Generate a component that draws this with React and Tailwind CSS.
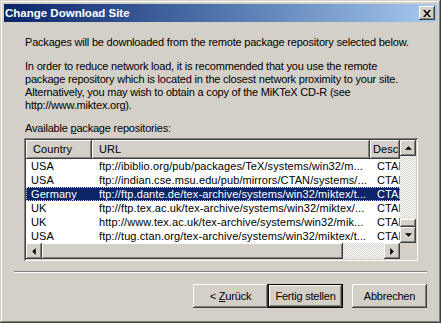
const raised =
  "bg-[#d4d0c8] shadow-[inset_-1px_-1px_#404040,inset_1px_1px_#fff,inset_-2px_-2px_#808080,inset_2px_2px_#d4d0c8]";
const track =
  "bg-[repeating-conic-gradient(#fff_0_25%,#d4d0c8_0_50%)] bg-size-[2px_2px]";

const Arrow = ({ dir }) => {
  const pts = {
    up: "0,4 4,0 8,4",
    down: "0,0 8,0 4,4",
    left: "4,0 4,8 0,4",
    right: "0,0 0,8 4,4",
  }[dir];
  const vert = dir === "up" || dir === "down";
  return (
    <svg width={vert ? 7 : 4} height={vert ? 4 : 7} viewBox={vert ? "0 0 8 4" : "0 0 4 8"}>
      <polygon points={pts} fill="#000" />
    </svg>
  );
};

const rows = [
  ["USA", "ftp://ibiblio.org/pub/packages/TeX/systems/win32/m...", "CTAN"],
  ["USA", "ftp://indian.cse.msu.edu/pub/mirrors/CTAN/systems/...", "CTAN"],
  ["Germany", "ftp://ftp.dante.de/tex-archive/systems/win32/miktex/t...", "CTAN"],
  ["UK", "ftp://ftp.tex.ac.uk/tex-archive/systems/win32/miktex/...", "CTAN"],
  ["UK", "http://www.tex.ac.uk/tex-archive/systems/win32/mik...", "CTAN"],
  ["USA", "ftp://tug.ctan.org/tex-archive/systems/win32/miktex/t...", "CTAN"],
];

const Button = ({ children, isDefault }) => (
  <div className={`w-[75px] h-[24px] ${isDefault ? "border border-black" : ""}`}>
    <div className={`w-full h-full flex items-center justify-center ${raised}`}>
      <span className="whitespace-pre">{children}</span>
    </div>
  </div>
);

export default function App() {
  return (
    <div className="w-[441px] h-[323px] bg-[#d4d0c8] p-[4px] text-[11px] leading-[13px] tracking-[-0.2px] text-black font-['Liberation_Sans',Arial,sans-serif] shadow-[inset_-1px_-1px_#404040,inset_1px_1px_#d4d0c8,inset_-2px_-2px_#808080,inset_2px_2px_#fff]">
      {/* title bar */}
      <div className="h-[18px] flex items-center justify-between pl-[1px] pr-[2px] bg-linear-to-r from-[#0a246a] to-[#a6caf0]">
        <span className="text-white font-bold text-[11.5px] tracking-normal">Change Download Site</span>
        <div className={`w-[16px] h-[14px] flex items-center justify-center ${raised}`}>
          <svg width="8" height="7" viewBox="0 0 8 7">
            <path d="M0 0h2l2 2.5L6 0h2L5 3.5 8 7H6L4 4.5 2 7H0l3-3.5z" fill="#000" />
          </svg>
        </div>
      </div>

      <div className="pl-[21px]">
        <p className="mt-[14px] whitespace-nowrap">
          Packages will be downloaded from the remote package repository selected below.
        </p>
        <p className="mt-[11px] whitespace-nowrap">
          In order to reduce network load, it is recommended that you use the remote
          <br />
          package repository which is located in the closest network proximity to your site.
          <br />
          Alternatively, you may wish to obtain a copy of the MiKTeX CD-R (see
          <br />
          http://www.miktex.org).
        </p>
        <p className="mt-[10px]">
          Available <span className="underline">p</span>ackage repositories:
        </p>
      </div>

      {/* list view */}
      <div className="ml-[20px] mt-[3px] w-[394px] h-[123px] bg-white tracking-[0.1px] shadow-[inset_1px_1px_#808080,inset_-1px_-1px_#fff,inset_2px_2px_#404040,inset_-2px_-2px_#d4d0c8] p-[2px] flex flex-col">
        <div className="flex h-[103px]">
          <div className="w-[374px] flex flex-col overflow-hidden">
            <div className="flex h-[19px] shrink-0">
              <div className={`w-[66px] shrink-0 pl-[7px] flex items-center ${raised}`}>Country</div>
              <div className={`w-[278px] shrink-0 pl-[7px] flex items-center ${raised}`}>URL</div>
              <div className={`w-[30px] shrink-0 pl-[3px] flex items-center whitespace-nowrap ${raised}`}>Desc</div>
            </div>
            {rows.map(([c, u, d], i) => (
              <div
                key={i}
                className={`flex h-[14px] items-center whitespace-nowrap ${
                  i === 2 ? "bg-[#0a246a] text-white outline-1 outline-dotted outline-[#d4d0c8] -outline-offset-1" : ""
                }`}
              >
                <div className="w-[66px] shrink-0 pl-[5px] overflow-hidden">{c}</div>
                <div className="w-[278px] shrink-0 pl-[7px] overflow-hidden">{u}</div>
                <div className="w-[30px] shrink-0 pl-[7px] overflow-hidden">{d}</div>
              </div>
            ))}
          </div>
          {/* vertical scrollbar */}
          <div className="w-[16px] flex flex-col">
            <div className={`h-[16px] flex items-center justify-center ${raised}`}>
              <Arrow dir="up" />
            </div>
            <div className={`h-[63px] ${track}`} />
            <div className={`h-[8px] ${raised}`} />
            <div className={`h-[16px] flex items-center justify-center ${raised}`}>
              <Arrow dir="down" />
            </div>
          </div>
        </div>
        {/* horizontal scrollbar */}
        <div className="flex h-[16px]">
          <div className={`w-[16px] flex items-center justify-center ${raised}`}>
            <Arrow dir="left" />
          </div>
          <div className={`w-[301px] ${raised}`} />
          <div className={`w-[41px] ${track}`} />
          <div className={`w-[16px] flex items-center justify-center ${raised}`}>
            <Arrow dir="right" />
          </div>
          <div className="w-[16px] bg-[#d4d0c8]" />
        </div>
      </div>

      {/* separator */}
      <div className="mx-[10px] mt-[10px] h-[2px] border-t border-[#808080] border-b border-b-white" />

      <div className="mt-[11px] pr-[10px] flex justify-end">
        <Button>
          {"< "}
          <span className="underline">Z</span>urück
        </Button>
        <Button isDefault>Fertig stellen</Button>
        <div className="w-[9px]" />
        <Button>Abbrechen</Button>
      </div>
    </div>
  );
}
